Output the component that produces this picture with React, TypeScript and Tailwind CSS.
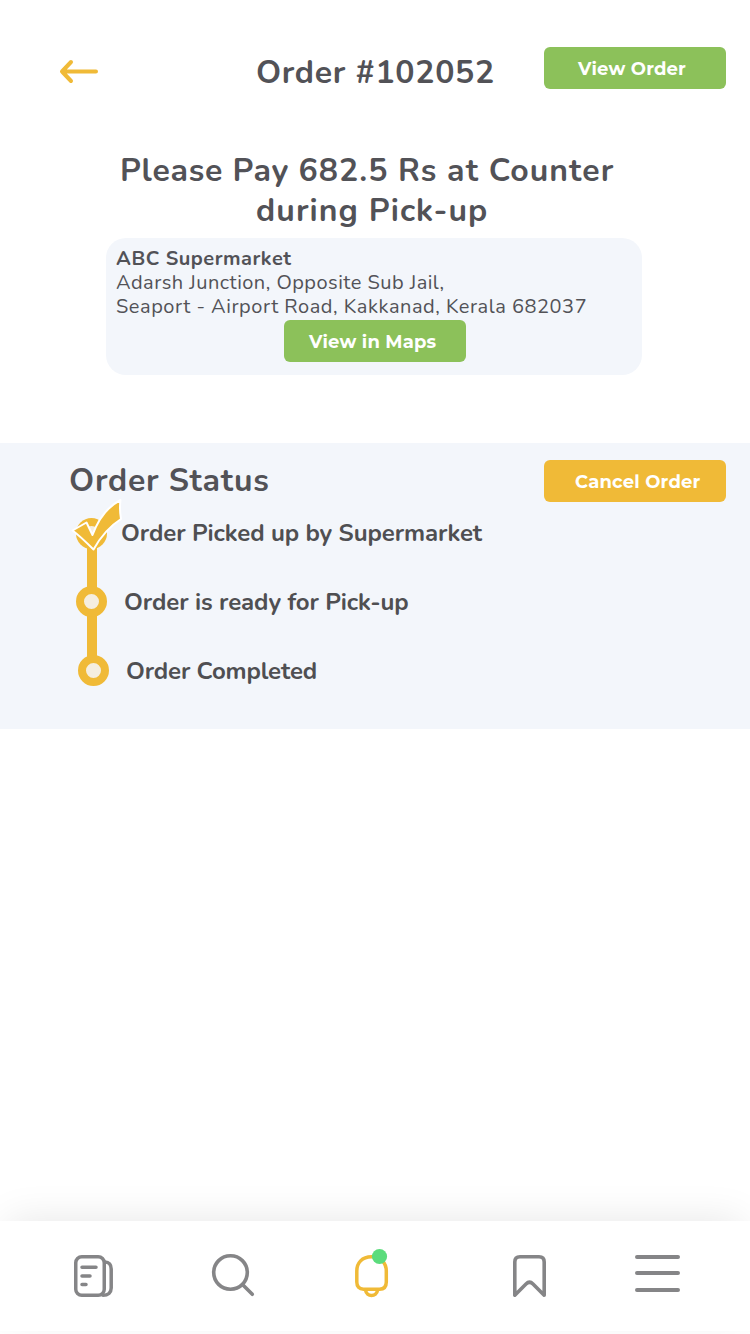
import React from "react";

const bodyFont = "font-['Nunito','Lato',sans-serif]";
const buttonFont = "font-['Montserrat','Inter',sans-serif]";

type ButtonProps = { label: string; className: string };

function ActionButton({ label, className }: ButtonProps) {
  return (
    <button
      className={`${buttonFont} flex h-[42px] w-[182px] shrink-0 items-center rounded-[6px] pt-0.5 text-[18px] font-bold tracking-[0.18px] whitespace-nowrap text-white ${className}`}
    >
      {label}
    </button>
  );
}

function Header() {
  return (
    <header className="flex h-[89px] items-start pt-[47px] pl-[59px]">
      <svg className="mt-3 h-[26px] w-10 shrink-0" viewBox="0 0 40 26" fill="none" stroke="#f0ba37" strokeWidth="4" strokeLinecap="round" strokeLinejoin="round">
        <path d="M37 12.5H3M12 3L3 12.5L12 22" />
      </svg>
      <h1 className="ml-[157px] w-[288px] text-[32px] leading-[52px] font-bold tracking-[0.72px] whitespace-nowrap">Order #102052</h1>
      <ActionButton label="View Order" className="bg-[#8cc15a] pl-[34px]" />
    </header>
  );
}

function StoreCard() {
  return (
    <section className="ml-[106px] h-[137px] w-[536px] rounded-[20px] bg-[#f3f6fb] px-2.5 pt-[9px]">
      <div className="text-[20px] leading-6 whitespace-nowrap">
        <h3 className="font-bold tracking-[0.5px]">ABC Supermarket</h3>
        <p className="tracking-[0.48px]">Adarsh Junction, Opposite Sub Jail,</p>
        <p className="tracking-[0.53px]">Seaport - Airport Road, Kakkanad, Kerala 682037</p>
      </div>
      <div className="mt-px ml-[168px]">
        <ActionButton label="View in Maps" className="bg-[#8cc15a] pl-[25px]" />
      </div>
    </section>
  );
}

function Timeline() {
  return (
    <svg className="h-[190px] w-[56px] shrink-0" viewBox="70 498 56 190">
      <path d="M92 534V670" stroke="#f0ba37" strokeWidth="10" />
      <circle cx="91.5" cy="533.5" r="15.5" fill="#f0ba37" />
      <circle cx="91.5" cy="533.5" r="7.5" fill="#f5eedf" />
      <circle cx="91.5" cy="601.5" r="11.5" fill="#f5eedf" stroke="#f0ba37" strokeWidth="8" />
      <circle cx="93.5" cy="670.5" r="11.5" fill="#f5eedf" stroke="#f0ba37" strokeWidth="8" />
      <path d="M72.5 530.5L86.5 522.5L92.5 535C98 520 107 507 120.5 500C119.5 507 120 513 121 519C110 526 101 536 93.5 549.5C87 543 80 536 72.5 530.5Z" fill="#f0ba37" stroke="white" strokeWidth="2" strokeLinejoin="round" />
    </svg>
  );
}

function OrderStatus() {
  return (
    <section className="mt-[68px] h-[286px] bg-[#f3f6fb] pt-[17px]">
      <div className="flex h-[38px] pl-[69px]">
        <h2 className="w-[475px] pt-px text-[32px] leading-10 font-bold tracking-[0.76px]">Order Status</h2>
        <ActionButton label="Cancel Order" className="bg-[#f0ba37] pl-[31px]" />
      </div>
      <div className="flex pl-[70px]">
        <Timeline />
        <ol className="-ml-[5px] pt-5 text-[24px] leading-[30px] font-bold tracking-[-0.08px] whitespace-nowrap text-[#4f4f52]">
          <li className="mb-[39px]">Order Picked up by Supermarket</li>
          <li className="mb-[39px] pl-[3px]">Order is ready for Pick-up</li>
          <li className="pl-[5px] tracking-[-0.14px]">Order Completed</li>
        </ol>
      </div>
    </section>
  );
}

function BottomNav() {
  return (
    <footer className="mt-auto pb-[3px]">
      <nav className="flex h-[110px] items-start bg-white pt-[31px] pl-[72px] text-[#858587] shadow-[0_-8px_40px_-8px_rgba(0,0,0,0.1)]">
        <svg className="h-12 w-11" viewBox="72 1252 44 48" fill="none" stroke="currentColor" strokeWidth="3.5" strokeLinecap="round">
          <rect x="75.75" y="1256.75" width="28.5" height="38.5" rx="6" />
          <path d="M105 1262C109 1262 111.2 1265 111.2 1269V1288C111.2 1292.5 108 1295.3 103 1295.3" />
          <path d="M82 1267.3H96M82 1276H90M82 1284.6H86" />
        </svg>
        <svg className="ml-[94px] h-12 w-12" viewBox="210 1252 48 48" fill="none" stroke="currentColor" strokeWidth="3.6" strokeLinecap="round">
          <circle cx="230.5" cy="1272.5" r="16.8" />
          <path d="M243 1285L252.3 1294.3" />
        </svg>
        <svg className="-mt-1 ml-[94px] h-[52px] w-10" viewBox="352 1248 40 52" fill="none" stroke="#f0ba37" strokeWidth="3.5">
          <path d="M371.5 1256.8C362 1256.8 356.8 1263 356.8 1271V1282C356.8 1286.5 359.3 1289.2 363.5 1289.2H379.5C383.8 1289.2 386.3 1286.5 386.3 1282V1271C386.3 1263 381 1256.8 371.5 1256.8Z" />
          <path d="M365.5 1290C366.5 1297.2 376.6 1297.2 377.6 1290" />
          <circle cx="379.5" cy="1256.5" r="7.6" fill="#5bdc7c" stroke="none" />
        </svg>
        <svg className="ml-[118px] h-12 w-10" viewBox="510 1252 40 48" fill="none" stroke="currentColor" strokeWidth="3.6" strokeLinecap="round" strokeLinejoin="round">
          <path d="M514.8 1295.2V1262C514.8 1258.7 516.8 1256.8 520 1256.8H539C542.3 1256.8 544.2 1258.7 544.2 1262V1295.2L533 1284C530.5 1281.5 528.5 1281.5 526 1284Z" />
        </svg>
        <svg className="ml-[82px] h-12 w-[52px]" viewBox="632 1252 52 48" stroke="currentColor" strokeWidth="4" strokeLinecap="round">
          <path d="M637 1257H678M637 1273H678M637 1290H678" />
        </svg>
      </nav>
    </footer>
  );
}

export default function App() {
  return (
    <main className={`${bodyFont} flex h-[1334px] w-[750px] flex-col overflow-hidden bg-white text-[#525257]`}>
      <Header />
      <h2 className="mt-[62px] ml-[120px] h-[87px] text-[32px] leading-10 font-bold tracking-[1.03px] whitespace-nowrap">
        <span className="block"><span className="tracking-[0.74px]">Please Pay </span>682.5 Rs at Counter</span>
        <span className="block pl-[136px] tracking-[1.08px]">during Pick-up</span>
      </h2>
      <StoreCard />
      <OrderStatus />
      <BottomNav />
    </main>
  );
}
